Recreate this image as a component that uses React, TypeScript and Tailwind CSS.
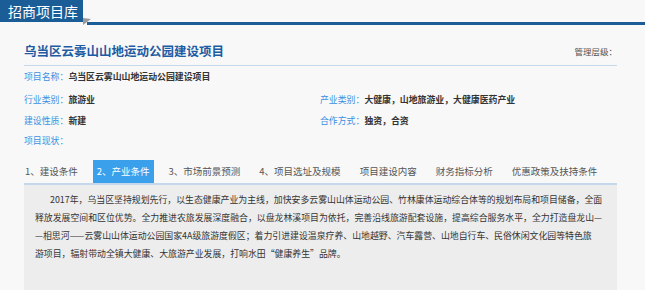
import React from "react";

const tabs = [
  "1、建设条件",
  "2、产业条件",
  "3、市场前景预测",
  "4、项目选址及规模",
  "项目建设内容",
  "财务指标分析",
  "优惠政策及扶持条件",
];

const lines = [
  "2017年，乌当区坚持规划先行，以生态健康产业为主线，加快安多云雾山山体运动公园、竹林康体运动综合体等的规划布局和项目储备，全面",
  "释放发展空间和区位优势。全力推进农旅发展深度融合，以盘龙林溪项目为依托，完善沿线旅游配套设施，提高综合服务水平，全力打造盘龙山—",
  "—相思河——云雾山山体运动公园国家4A级旅游度假区；着力引进建设温泉疗养、山地越野、汽车露营、山地自行车、民俗休闲文化园等特色旅",
  "游项目，辐射带动全镇大健康、大旅游产业发展，打响水田“健康养生”品牌。",
];

function Field({ label, value }: { label: string; value?: string }) {
  return (
    <div className="flex items-center">
      <span className="text-[#3a90e2]">{label}</span>
      {value && <span className="text-[#333] font-bold">{value}</span>}
    </div>
  );
}

export default function App() {
  return (
    <div className="w-[645px] h-[290px] overflow-hidden bg-[#f8f8f8] font-['Noto_Sans_CJK_SC',sans-serif]">
      {/* header */}
      <div className="flex h-[25px]">
        <div className="h-[22px] w-[83px] bg-[#1b5d97] pl-[8px] text-[14px] leading-[22px] text-white">
          招商项目库
        </div>
        <div className="relative flex flex-1 flex-col justify-end">
          <svg className="absolute left-0 top-[18px]" width="8" height="7" viewBox="0 0 8 7">
            <polygon points="0,0 8,1 0,7" fill="#9a9a9a" />
          </svg>
          <div className="ml-[4px] h-[3px] bg-[#1b5d97]" />
        </div>
      </div>

      <div className="pl-[24px] pr-[28px]">
        {/* title */}
        <div className="mt-[18px] flex items-center justify-between border-b border-[#c6d9ec] pb-[6px]">
          <div className="text-[12.5px] font-bold leading-[16px] text-[#1d5ba3]">乌当区云雾山山地运动公园建设项目</div>
          <div className="text-[8.5px] leading-[16px] text-[#555]">管理层级：</div>
        </div>

        {/* fields */}
        <div className="text-[8.9px] leading-[20px]">
          <div className="mt-[1px]">
            <Field label="项目名称：" value="乌当区云雾山山地运动公园建设项目" />
          </div>
          <div className="mt-[3px] grid grid-cols-[296px_1fr]">
            <Field label="行业类别：" value="旅游业" />
            <Field label="产业类别：" value="大健康，山地旅游业，大健康医药产业" />
          </div>
          <div className="mt-[1px] grid grid-cols-[296px_1fr]">
            <Field label="建设性质：" value="新建" />
            <Field label="合作方式：" value="独资，合资" />
          </div>
          <Field label="项目现状：" />
        </div>

        {/* tabs */}
        <div className="ml-[-3px] mt-[9px] flex h-[23px] items-stretch gap-[11px] text-[9.5px]">
          {tabs.map((t, i) =>
            i === 1 ? (
              <div key={t} className="flex items-center bg-[#3aa0ec] px-[4px] text-white">
                {t}
              </div>
            ) : (
              <div key={t} className="flex items-center px-[4px] text-[#555]">
                {t}
              </div>
            )
          )}
        </div>

        {/* content */}
        <div className="h-[120px] border-t-2 border-[#c5d7ea] bg-[#ededed] pl-[11px] pt-[6px] text-[8.9px] leading-[18px] text-[#333]">
          {lines.map((l, i) => (
            <div key={i} className={i === 0 ? "whitespace-nowrap pl-[15px]" : "whitespace-nowrap"}>
              {l}
            </div>
          ))}
        </div>
      </div>
    </div>
  );
}
